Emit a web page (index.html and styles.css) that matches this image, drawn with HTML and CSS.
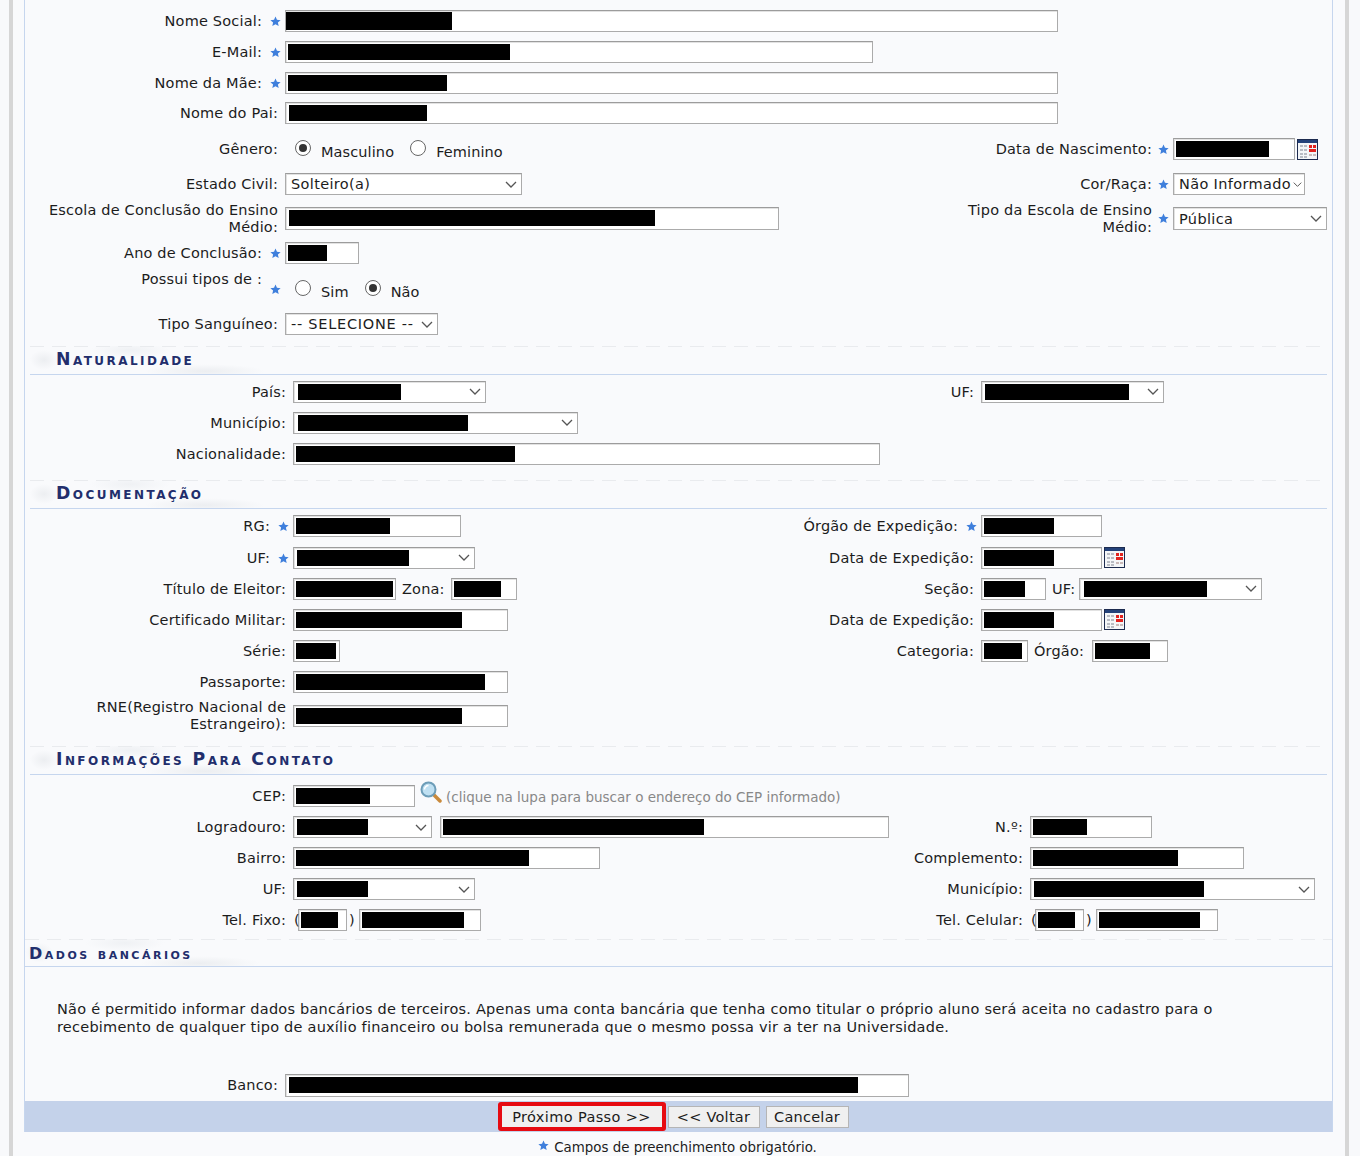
FILE: index.html
```html
<!DOCTYPE html>
<html lang="pt-BR">
<head>
    <meta charset="UTF-8">
    <title>Dados Pessoais</title>
    <link rel="stylesheet" href="styles.css">
</head>
<body>
    <svg class="defs" width="0" height="0">
        <symbol id="star" viewBox="0 0 12 12"><path d="M6 .5l1.6 3.7 4 .3-3 2.6.9 3.900L6 9l-3.500 2 .9-3.900-3-2.600 4-.3z"/></symbol>
        <symbol id="chev" viewBox="0 0 12 7"><path d="M1 1l5 5 5-5" fill="none" stroke="#555" stroke-width="1.300"/></symbol>
        <symbol id="cal" viewBox="0 0 21 21">
            <rect x=".5" y=".5" width="20" height="20" fill="#f4f6f8" stroke="#1d2b4f"/>
            <rect x="1" y="1" width="19" height="3" fill="#24427a"/>
            <path d="M3 6h3v2H3zM7 6h3v2H7zM3 10h3v2H3zM7 10h3v2H7zM3 14h3v2H3zM7 14h3v2H7zM3 17h3v2H3zM7 17h3v2H7z" fill="#b9bcc4"/>
            <path d="M12 6h3v3h-3zM16 6h3v3h-3zM12 10h7v3h-7z" fill="#e2231f"/>
            <path d="M12 15h3v2h-3zM16 15h3v2h-3z" fill="#c9b9b9"/>
        </symbol>
    </svg>

    <div class="page">
        <div class="panel">
            <div class="group form-top" style="--l:255px;--f:675px;--r:213px">
                <div class="row"><div class="lbl req">Nome Social:<svg class="star"><use href="#star"/></svg></div>
                    <div class="input w773 first"><i class="mask m166"></i></div></div>
                <div class="row"><div class="lbl req">E-Mail:<svg class="star"><use href="#star"/></svg></div>
                    <div class="input w588"><i class="mask m222"></i></div></div>
                <div class="row short"><div class="lbl req">Nome da Mãe:<svg class="star"><use href="#star"/></svg></div>
                    <div class="input w773"><i class="mask m159"></i></div></div>
                <div class="row"><div class="lbl">Nome do Pai:</div>
                    <div class="input w773 offset"><i class="mask m138"></i></div></div>

                <div class="row gap5">
                    <div class="lbl">Gênero:</div>
                    <div class="fld">
                        <span class="radio on"></span><span class="opt">Masculino</span>
                        <span class="radio"></span><span class="opt">Feminino</span>
                    </div>
                    <div class="lbl right req">Data de Nascimento:<svg class="star"><use href="#star"/></svg></div>
                    <div class="input w122"><i class="mask m93"></i></div>
                    <svg class="cal"><use href="#cal"/></svg>
                </div>
                <div class="row gap4">
                    <div class="lbl">Estado Civil:</div>
                    <div class="fld"><div class="select w237"><span>Solteiro(a)</span><svg class="chev"><use href="#chev"/></svg></div></div>
                    <div class="lbl right req">Cor/Raça:<svg class="star"><use href="#star"/></svg></div>
                    <div class="select w132 tight"><span>Não Informado</span><svg class="chev"><use href="#chev"/></svg></div>
                </div>
                <div class="row gap3">
                    <div class="lbl">Escola de Conclusão do Ensino<br>Médio:</div>
                    <div class="fld"><div class="input w494 tall"><i class="mask m366"></i></div></div>
                    <div class="lbl right req"><span>Tipo da Escola de Ensino<br>Médio:</span><svg class="star"><use href="#star"/></svg></div>
                    <div class="select w154 tall"><span>Pública</span><svg class="chev"><use href="#chev"/></svg></div>
                </div>
                <div class="row gap4"><div class="lbl req">Ano de Conclusão:<svg class="star"><use href="#star"/></svg></div>
                    <div class="input w74"><i class="mask m39"></i></div></div>
                <div class="row radios">
                    <div class="lbl req stack"><span>Possui tipos de :</span><svg class="star"><use href="#star"/></svg></div>
                    <div class="fld">
                        <span class="radio"></span><span class="opt">Sim</span>
                        <span class="radio on"></span><span class="opt">Não</span>
                    </div>
                </div>
                <div class="row"><div class="lbl">Tipo Sanguíneo:</div>
                    <div class="select w153 placeholder"><span>-- SELECIONE --</span><svg class="chev"><use href="#chev"/></svg></div></div>
            </div>

            <div class="group" style="--l:263px;--f:407px;--r:281px">
                <h2 class="sec sec-nat">Naturalidade</h2>
                <div class="row gap1">
                    <div class="lbl">País:</div>
                    <div class="fld"><div class="select w193 inset"><i class="mask m103"></i><svg class="chev"><use href="#chev"/></svg></div></div>
                    <div class="lbl right">UF:</div>
                    <div class="select w183"><i class="mask m144"></i><svg class="chev"><use href="#chev"/></svg></div>
                </div>
                <div class="row"><div class="lbl">Município:</div>
                    <div class="select w285 inset"><i class="mask m170"></i><svg class="chev"><use href="#chev"/></svg></div></div>
                <div class="row"><div class="lbl">Nacionalidade:</div>
                    <div class="input w587"><i class="mask m219"></i></div></div>
            </div>

            <div class="group" style="--l:263px;--f:487px;--r:201px">
                <h2 class="sec sec-doc">Documentação</h2>
                <div class="row gap1">
                    <div class="lbl req">RG:<svg class="star"><use href="#star"/></svg></div>
                    <div class="fld"><div class="input w168"><i class="mask m94"></i></div></div>
                    <div class="lbl right req">Órgão de Expedição:<svg class="star"><use href="#star"/></svg></div>
                    <div class="input w121"><i class="mask m70"></i></div>
                </div>
                <div class="row gap1">
                    <div class="lbl req">UF:<svg class="star"><use href="#star"/></svg></div>
                    <div class="fld"><div class="select w182"><i class="mask m112"></i><svg class="chev"><use href="#chev"/></svg></div></div>
                    <div class="lbl right">Data de Expedição:</div>
                    <div class="input w121"><i class="mask m70"></i></div>
                    <svg class="cal"><use href="#cal"/></svg>
                </div>
                <div class="row">
                    <div class="lbl">Título de Eleitor:</div>
                    <div class="fld">
                        <div class="input w103"><i class="mask m97"></i></div>
                        <span class="inline-lbl">Zona:</span>
                        <div class="input w66"><i class="mask m47"></i></div>
                    </div>
                    <div class="lbl right">Seção:</div>
                    <div class="input w65"><i class="mask m41"></i></div>
                    <span class="inline-lbl snug">UF:</span>
                    <div class="select w183 inset"><i class="mask m123"></i><svg class="chev"><use href="#chev"/></svg></div>
                </div>
                <div class="row">
                    <div class="lbl">Certificado Militar:</div>
                    <div class="fld"><div class="input w215"><i class="mask m166"></i></div></div>
                    <div class="lbl right">Data de Expedição:</div>
                    <div class="input w121"><i class="mask m70"></i></div>
                    <svg class="cal"><use href="#cal"/></svg>
                </div>
                <div class="row">
                    <div class="lbl">Série:</div>
                    <div class="fld"><div class="input w47"><i class="mask m40"></i></div></div>
                    <div class="lbl right">Categoria:</div>
                    <div class="input w47"><i class="mask m38"></i></div>
                    <span class="inline-lbl loose">Órgão:</span>
                    <div class="input w76"><i class="mask m55"></i></div>
                </div>
                <div class="row"><div class="lbl">Passaporte:</div>
                    <div class="input w215"><i class="mask m189"></i></div></div>
                <div class="row gap3"><div class="lbl">RNE(Registro Nacional de<br>Estrangeiro):</div>
                    <div class="input w215"><i class="mask m166"></i></div></div>
            </div>

            <div class="group" style="--l:263px;--f:607px;--r:130px">
                <h2 class="sec sec-con">Informações Para Contato</h2>
                <div class="row gap6">
                    <div class="lbl">CEP:</div>
                    <div class="input w122"><i class="mask m74"></i></div>
                    <svg class="lupa" viewBox="0 0 22 22">
                        <path d="M13 13l7 7" stroke="#c98a3c" stroke-width="3.500" stroke-linecap="round"/>
                        <circle cx="8.500" cy="8.500" r="7" fill="#bfe0f2" stroke="#6d9db8" stroke-width="2"/>
                        <path d="M4.500 8.500a4 4 0 0 1 4-4" fill="none" stroke="#fff" stroke-width="1.500"/>
                    </svg>
                    <span class="hint">(clique na lupa para buscar o endereço do CEP informado)</span>
                </div>
                <div class="row">
                    <div class="lbl">Logradouro:</div>
                    <div class="fld">
                        <div class="select w139"><i class="mask m71"></i><svg class="chev"><use href="#chev"/></svg></div>
                        <div class="input w449 spaced"><i class="mask m261"></i></div>
                    </div>
                    <div class="lbl right">N.º:</div>
                    <div class="input w122"><i class="mask m54"></i></div>
                </div>
                <div class="row">
                    <div class="lbl">Bairro:</div>
                    <div class="fld"><div class="input w307"><i class="mask m233"></i></div></div>
                    <div class="lbl right">Complemento:</div>
                    <div class="input w214"><i class="mask m145"></i></div>
                </div>
                <div class="row">
                    <div class="lbl">UF:</div>
                    <div class="fld"><div class="select w182"><i class="mask m71"></i><svg class="chev"><use href="#chev"/></svg></div></div>
                    <div class="lbl right">Município:</div>
                    <div class="select w285"><i class="mask m170"></i><svg class="chev"><use href="#chev"/></svg></div>
                </div>
                <div class="row">
                    <div class="lbl">Tel. Fixo:</div>
                    <div class="fld">
                        <span class="paren">(</span><div class="input w49"><i class="mask m37"></i></div><span class="paren close">)</span>
                        <div class="input w122 after-paren"><i class="mask m102"></i></div>
                    </div>
                    <div class="lbl right">Tel. Celular:</div>
                    <span class="paren">(</span><div class="input w49"><i class="mask m37"></i></div><span class="paren close">)</span>
                    <div class="input w122 after-paren"><i class="mask m101"></i></div>
                </div>
            </div>

            <h2 class="sec sec-wide">Dados bancários</h2>
            <p class="notice">Não é permitido informar dados bancários de terceiros. Apenas uma conta bancária que tenha como titular o próprio aluno será aceita no cadastro para o<br>recebimento de qualquer tipo de auxílio financeiro ou bolsa remunerada que o mesmo possa vir a ter na Universidade.</p>
            <div class="group" style="--l:255px">
                <div class="row"><div class="lbl">Banco:</div>
                    <div class="input w624 tall"><i class="mask m569"></i></div></div>
            </div>

            <div class="actions">
                <button class="btn next">Próximo Passo &gt;&gt;</button>
                <button class="btn back">&lt;&lt; Voltar</button>
                <button class="btn cancel">Cancelar</button>
            </div>
        </div>
        <div class="footnote"><svg class="star"><use href="#star"/></svg>Campos de preenchimento obrigatório.</div>
    </div>
</body>
</html>
```

FILE: styles.css
```css
* {
    margin: 0;
    padding: 0;
    box-sizing: border-box;
}

html, body {
    height: 1156px;
    overflow: hidden;
}

body {
    font-family: "DejaVu Sans", Verdana, sans-serif;
    font-size: 14.5px;
    letter-spacing: .18px;
    color: #1c1c1c;
    background: #f8f9fb;
}

.defs {
    position: absolute;
}

.page {
    width: 1340px;
    height: 1156px;
    margin-left: 9px;
    padding: 0 12px 0 11px;
    background: #f9fafc;
    border-left: 4px solid #d6d6d6;
    border-right: 4px solid #d6d6d6;
}

.panel {
    background: #f9fafc;
    border-left: 1px solid #c6d6ee;
    border-right: 1px solid #c6d6ee;
}

.group {
    margin: 0 5px;
}

.form-top {
    padding-top: 5.500px;
}

.row {
    display: flex;
    align-items: center;
    height: 31px;
}

.row.short { height: 30px; }
.row.radios { height: 39px; margin-top: 1px; }
.gap1 { margin-top: 1px; }
.gap3 { margin-top: 3px; }
.gap4 { margin-top: 4px; }
.gap5 { margin-top: 5px; }
.gap6 { margin-top: 6px; }

.lbl {
    flex: none;
    width: var(--l);
    padding: 1px 7px 0 0;
    text-align: right;
    line-height: 17px;
}

.lbl.right {
    width: var(--r);
}

.lbl.req {
    padding-right: 4px;
    display: flex;
    justify-content: flex-end;
    align-items: center;
}

.lbl.stack {
    align-self: stretch;
    padding-top: 0;
}

.lbl.stack span {
    align-self: flex-start;
    line-height: 18px;
}

.star {
    flex: none;
    width: 11px;
    height: 11px;
    margin-left: 8px;
    fill: #3f7fdc;
}

.form-top .right .star {
    margin-left: 6px;
}

.fld {
    flex: none;
    display: flex;
    align-items: center;
    width: var(--f);
}

.input, .select {
    flex: none;
    display: flex;
    align-items: center;
    height: 22px;
    background: #fff;
    border: 1px solid #ababab;
    border-top-color: #9c9c9c;
    box-shadow: inset 1px 1px 0 #e2e2e2;
}

.input {
    padding-left: 2px;
}

.input.first {
    padding-left: 0;
}

.input.offset {
    padding-left: 3px;
}

.input.tall {
    height: 23px;
    padding-left: 3px;
}

.input.spaced {
    margin-left: 8px;
}

.input.after-paren {
    margin-left: 5px;
}

.select {
    justify-content: space-between;
    padding: 0 4px 0 3px;
}

.select.tall {
    height: 23px;
}

.select.tall span {
    padding-top: 1px;
}

.select.inset {
    padding-left: 4px;
}

.select span {
    padding-left: 2px;
    letter-spacing: .35px;
    white-space: nowrap;
}

.select.placeholder span {
    letter-spacing: .75px;
}

.select.tight {
    padding-right: 2px;
    overflow: hidden;
}

.select.tight .chev {
    width: 9px;
    margin-left: -2px;
}

.mask {
    display: block;
    height: 16px;
    background: #000;
}

.first .mask {
    height: 18px;
}

.chev {
    flex: none;
    width: 12px;
    height: 7px;
}

.cal {
    flex: none;
    width: 21px;
    height: 21px;
    margin-left: 2px;
}

.lupa {
    flex: none;
    width: 22px;
    height: 22px;
    margin: -9px 0 0 5px;
}

.hint {
    margin-left: 4px;
    padding-top: 2px;
    font-size: 13.500px;
    letter-spacing: 0;
    color: #888;
}

.inline-lbl {
    margin: 0 6px;
}

.inline-lbl.snug {
    margin-right: 3.500px;
}

.inline-lbl.loose {
    margin-right: 8px;
}

.paren {
    z-index: 1;
    width: 5px;
    margin: 0 -1px 0 1px;
}

.paren.close {
    margin: 0 0 0 2px;
}

.radio {
    flex: none;
    position: relative;
    width: 16px;
    height: 16px;
    margin-left: 10px;
    margin-top: -3px;
    background: #fff;
    border: 1px solid #666;
    border-radius: 50%;
}

.radio.on::after {
    content: "";
    position: absolute;
    top: 3px;
    left: 3px;
    width: 8px;
    height: 8px;
    background: #333;
    border-radius: 50%;
}

.opt {
    margin-left: 10px;
    margin-right: 6px;
    padding-top: 5px;
    letter-spacing: .1px;
}

.sec {
    display: flex;
    align-items: center;
    height: 29px;
    padding: 0 0 2px 26px;
    font-size: 17.300px;
    font-weight: bold;
    font-variant: small-caps;
    letter-spacing: 2.450px;
    color: #222e6c;
    border-bottom: 1px solid #c6d6ee;
    background:
        repeating-linear-gradient(90deg, #e9ebee 0 14px, transparent 14px 22px) top / 100% 1px no-repeat,
        radial-gradient(ellipse 60px 7px at 175px 90%, #eceef1, transparent),
        radial-gradient(ellipse 40px 8px at 100px 15%, #eff1f4, transparent),
        radial-gradient(ellipse 14px 10px at 14px 50%, #eceef1, transparent);
}

.sec-nat { margin-top: 6.500px; }
.sec-doc { margin-top: 11px; }
.sec-con { margin-top: 14.500px; }

.sec-wide {
    height: 28px;
    margin-top: 3.500px;
    padding: 1px 0 0 4px;
    font-size: 16px;
    letter-spacing: 2.500px;
}

.notice {
    margin: 33px 0 33.500px;
    padding-left: 32px;
    line-height: 18px;
    letter-spacing: .23px;
    white-space: nowrap;
}

.actions {
    display: flex;
    justify-content: center;
    align-items: center;
    height: 31px;
    margin-top: .5px;
    padding-right: 11px;
    background: #c4d2ea;
}

.btn {
    height: 22px;
    padding-top: 1px;
    font: inherit;
    letter-spacing: .25px;
    color: #1c1c1c;
    background: #f0f0f0;
    border: 1px solid #b5b5b5;
}

.btn.next {
    width: 168px;
    height: 29px;
    letter-spacing: .38px;
    border: 4px solid #e60b12;
    border-radius: 3px;
}

.btn.back {
    width: 92px;
    margin-left: 2px;
}

.btn.cancel {
    width: 83px;
    margin-left: 6px;
}

.footnote {
    display: flex;
    justify-content: center;
    align-items: center;
    padding: 8px 2px 0 0;
    font-size: 13.400px;
    letter-spacing: 0;
}

.footnote .star {
    margin: -5px 5px 0 0;
}

.w47 { width: 47px; }
.w49 { width: 49px; }
.w65 { width: 65px; }
.w66 { width: 66px; }
.w74 { width: 74px; }
.w76 { width: 76px; }
.w103 { width: 103px; }
.w121 { width: 121px; }
.w122 { width: 122px; }
.w132 { width: 132px; }
.w139 { width: 139px; }
.w153 { width: 153px; }
.w154 { width: 154px; }
.w168 { width: 168px; }
.w182 { width: 182px; }
.w183 { width: 183px; }
.w193 { width: 193px; }
.w214 { width: 214px; }
.w215 { width: 215px; }
.w237 { width: 237px; }
.w285 { width: 285px; }
.w307 { width: 307px; }
.w449 { width: 449px; }
.w494 { width: 494px; }
.w587 { width: 587px; }
.w588 { width: 588px; }
.w624 { width: 624px; }
.w773 { width: 773px; }

.m37 { width: 37px; }
.m38 { width: 38px; }
.m39 { width: 39px; }
.m40 { width: 40px; }
.m41 { width: 41px; }
.m47 { width: 47px; }
.m54 { width: 54px; }
.m55 { width: 55px; }
.m70 { width: 70px; }
.m71 { width: 71px; }
.m74 { width: 74px; }
.m93 { width: 93px; }
.m94 { width: 94px; }
.m97 { width: 97px; }
.m101 { width: 101px; }
.m102 { width: 102px; }
.m103 { width: 103px; }
.m112 { width: 112px; }
.m123 { width: 123px; }
.m138 { width: 138px; }
.m144 { width: 144px; }
.m145 { width: 145px; }
.m159 { width: 159px; }
.m166 { width: 166px; }
.m170 { width: 170px; }
.m189 { width: 189px; }
.m219 { width: 219px; }
.m222 { width: 222px; }
.m233 { width: 233px; }
.m261 { width: 261px; }
.m366 { width: 366px; }
.m569 { width: 569px; }
```
